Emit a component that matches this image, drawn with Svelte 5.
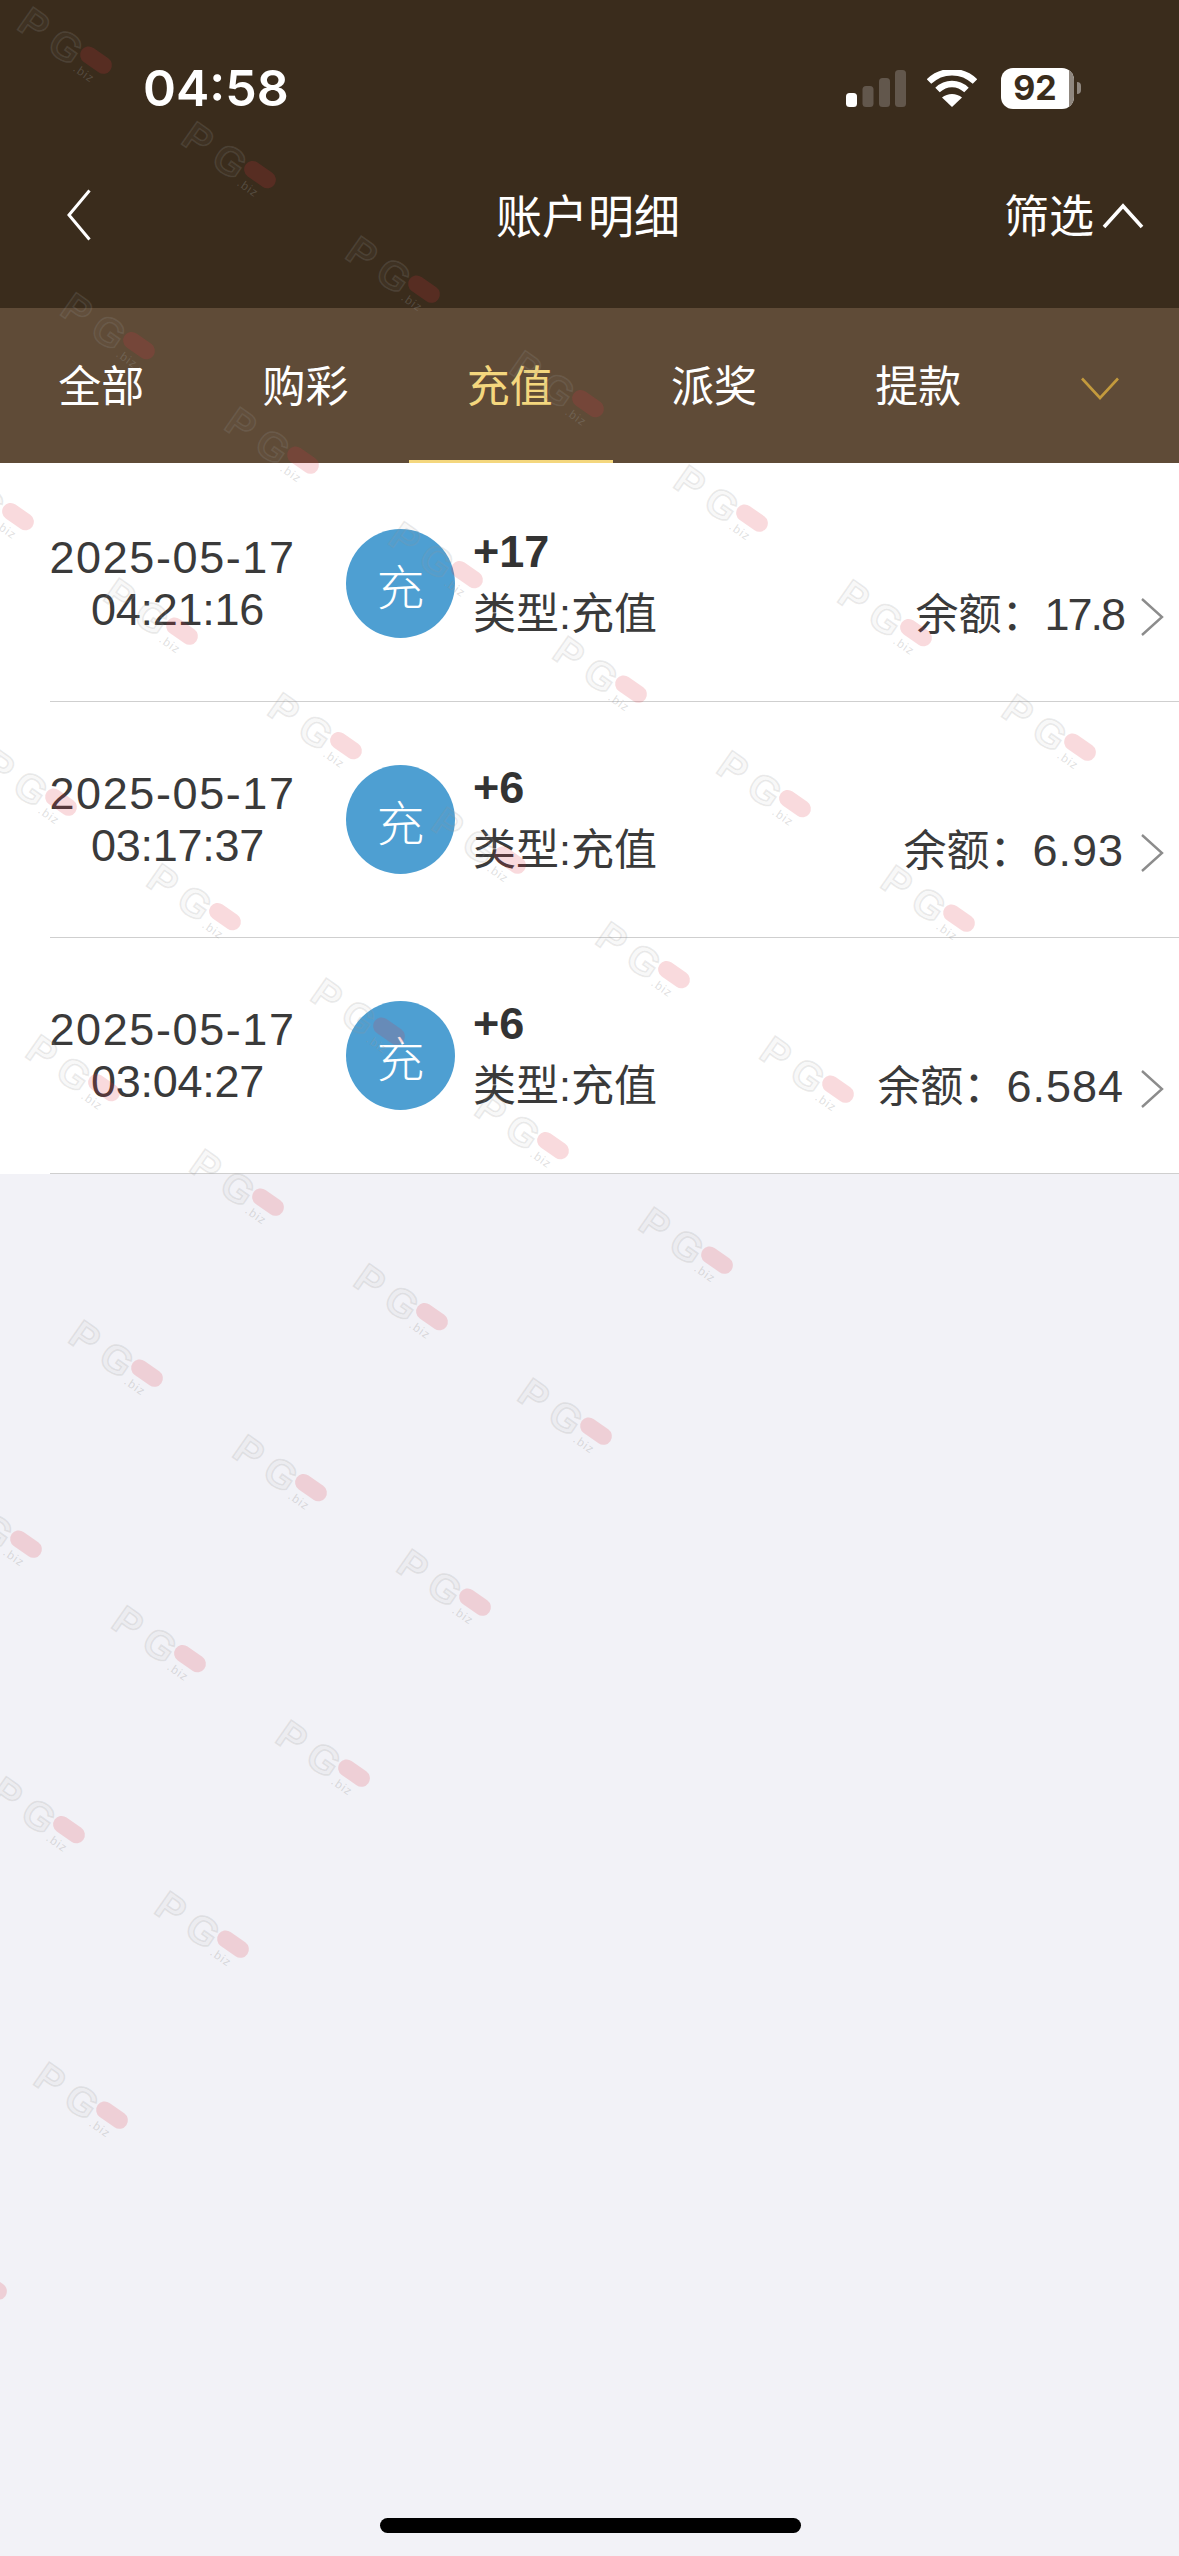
<script>
  const tabs = ['全部', '购彩', '充值', '派奖', '提款'];
  const rows = [
    { date: '2025-05-17', time: '04:21:16', amount: '+17', balance: '17.8', tight: true },
    { date: '2025-05-17', time: '03:17:37', amount: '+6', balance: '6.93', tight: false },
    { date: '2025-05-17', time: '03:04:27', amount: '+6', balance: '6.584', tight: false }
  ];
  const marks = [];
  for (let j = 0; j <= 9; j++) {
    for (let i = -3; i + j <= 6; i++) {
      const x = 19 + 164 * i + 43 * j;
      const y = 10 + 114.5 * i + 285.5 * j;
      if (x > -110 && x < 1179 && y > -80 && y < 2556) marks.push({ x, y });
    }
  }
</script>

<div class="page">
  <header class="top">
    <div class="status">
      <span class="clock">04:58</span>
      <div class="sys">
        <svg class="signal" width="60" height="37" viewBox="0 0 60 37">
          <rect x="0" y="23" width="11" height="14" rx="3.5" fill="#fff" />
          <rect x="16.5" y="16" width="11" height="21" rx="3.5" fill="#62574c" />
          <rect x="33" y="8" width="11" height="29" rx="3.5" fill="#62574c" />
          <rect x="49" y="0" width="11" height="37" rx="3.5" fill="#62574c" />
        </svg>
        <svg class="wifi" width="50" height="37" viewBox="0 0 50 37">
          <path d="M2 11.5C15 -1 35 -1 48 11.5" fill="none" stroke="#fff" stroke-width="6.5" />
          <path d="M10.5 20C19 12 31 12 39.5 20" fill="none" stroke="#fff" stroke-width="6.5" />
          <path d="M25 37L15 27.5C20.5 22.8 29.5 22.8 35 27.5Z" fill="#fff" />
        </svg>
        <div class="battery"><span>92</span><i></i></div>
        <b class="nub"></b>
      </div>
    </div>
    <nav class="nav">
      <svg class="back" width="24" height="52" viewBox="0 0 24 52">
        <path d="M22.5 1.5L2 26L22.5 50.5" fill="none" stroke="#fff" stroke-width="3" />
      </svg>
      <h1>账户明细</h1>
      <div class="filter">
        <span>筛选</span>
        <svg width="42" height="26" viewBox="0 0 42 26">
          <path d="M2 24L21 3L40 24" fill="none" stroke="#fff" stroke-width="3.6" />
        </svg>
      </div>
    </nav>
  </header>

  <div class="tabs">
    {#each tabs as t, i}
      <div class="tab" class:on={i === 2}>{t}</div>
    {/each}
    <div class="more">
      <svg width="38" height="23" viewBox="0 0 38 23">
        <path d="M1 1.5L19 21L37 1.5" fill="none" stroke="#c39a3d" stroke-width="2.6" />
      </svg>
    </div>
  </div>

  <section class="list">
    {#each rows as r}
      <div class="row">
        <div class="when"><div class="d">{r.date}</div><div class="t">{r.time}</div></div>
        <div class="badge">充</div>
        <div class="info">
          <div class="amount">{r.amount}</div>
          <div class="kind">类型:充值</div>
        </div>
        <div class="bal"><span class="lab">余额：</span><span class="val" class:tight={r.tight}>{r.balance}</span></div>
        <svg class="go" width="24" height="40" viewBox="0 0 24 40">
          <path d="M2 2L22 20L2 38" fill="none" stroke="#8c8c8c" stroke-width="2.4" />
        </svg>
      </div>
    {/each}
  </section>

  <div class="home"></div>

  <svg class="wm" width="1179" height="2556" viewBox="0 0 1179 2556" aria-hidden="true">
    {#each marks as m}
      <g transform="translate({m.x + 15} {m.y + 14}) rotate(35)">
        <text class="pg" x="-13" y="14">PG</text>
        <rect class="pill" x="54" y="-14.5" width="35" height="17" rx="8.5" />
        <text class="biz" x="58" y="16">.biz</text>
      </g>
    {/each}
  </svg>
</div>

<style>
  :global(body) {
    margin: 0;
    background: #f2f2f7;
  }
  .page {
    position: relative;
    width: 1179px;
    height: 2556px;
    overflow: hidden;
    background: #f2f2f7;
    font-family: "Liberation Sans", "Noto Sans CJK SC", sans-serif;
    color: #333;
  }
  .top {
    background: #3a2c1c;
    height: 308px;
    color: #fff;
  }
  .status {
    height: 176px;
    box-sizing: border-box;
    display: flex;
    align-items: center;
    padding: 0 98px 0 143px;
    justify-content: space-between;
  }
  .clock {
    font-family: Inter, "Liberation Sans", sans-serif;
    font-weight: 600;
    font-size: 50px;
    line-height: 1;
  }
  .sys {
    display: flex;
    align-items: center;
  }
  .signal {
    margin-right: 21px;
  }
  .wifi {
    margin-right: 24px;
  }
  .battery {
    position: relative;
    width: 73px;
    height: 41px;
    border-radius: 12px;
    background: #fff;
    overflow: hidden;
    display: flex;
    align-items: center;
    justify-content: center;
    padding-right: 5px;
    box-sizing: border-box;
  }
  .battery span {
    font-family: Inter, "Liberation Sans", sans-serif;
    font-weight: 700;
    font-size: 34px;
    color: #3a2c1c;
    line-height: 1;
  }
  .battery i {
    position: absolute;
    right: 0;
    top: 0;
    bottom: 0;
    width: 5px;
    background: #8f877f;
  }
  .nub {
    width: 4px;
    height: 12px;
    margin-left: 3px;
    border-radius: 0 4px 4px 0;
    background: #8f877f;
  }
  .nav {
    height: 78px;
    position: relative;
    display: flex;
    align-items: center;
    justify-content: center;
    font-family: "Noto Sans CJK SC", sans-serif;
  }
  .back {
    position: absolute;
    left: 67px;
    top: 13px;
  }
  h1 {
    margin: -5px 3px 0 0;
    font-size: 46px;
    font-weight: 400;
    line-height: 1;
  }
  .filter {
    position: absolute;
    left: 1004px;
    top: -3px;
    bottom: 0;
    display: flex;
    align-items: center;
    gap: 8px;
    font-size: 45px;
    line-height: 1;
  }
  .filter svg {
    margin-top: 5px;
  }
  .tabs {
    height: 155px;
    background: #5f4b37;
    display: flex;
    font-family: "Noto Sans CJK SC", sans-serif;
    font-size: 43px;
    color: #fff;
  }
  .tab {
    width: 204.3px;
    height: 155px;
    box-sizing: border-box;
    padding: 52px 2px 0 0;
    line-height: 46px;
    text-align: center;
    border-bottom: 3px solid transparent;
  }
  .tab.on {
    color: #f4d77e;
    border-bottom-color: #f4d77e;
  }
  .more {
    flex: 1;
    display: flex;
    justify-content: center;
    padding-top: 69px;
    box-sizing: border-box;
  }
  .more svg {
    margin-left: -1px;
  }
  .list {
    background: #fff;
    padding: 3px 0 0 50px;
  }
  .row {
    height: 236px;
    box-sizing: border-box;
    border-bottom: 1px solid #cfcfcf;
    display: flex;
    align-items: center;
  }
  .when {
    flex: none;
    width: 254px;
    margin: 0 46.5px 0 -4.5px;
    text-align: center;
    white-space: nowrap;
    font-size: 45px;
    line-height: 52px;
    color: #3a3a3a;
    padding-top: 1px;
  }
  .when .d {
    letter-spacing: 1.6px;
  }
  .when .t {
    padding-left: 10px;
    letter-spacing: -0.3px;
  }
  .badge {
    width: 109px;
    height: 109px;
    border-radius: 50%;
    background: #4e9fd2;
    color: #fff;
    font-family: "Noto Sans CJK SC", sans-serif;
    font-size: 48px;
    font-weight: 300;
    display: flex;
    align-items: center;
    justify-content: center;
    flex: none;
  }
  .info {
    margin-left: 18px;
  }
  .amount {
    font-size: 45px;
    font-weight: 700;
    line-height: 52px;
    height: 62px;
    margin-top: -2px;
    color: #333;
  }
  .kind {
    font-family: "Liberation Sans", "Noto Sans CJK SC", sans-serif;
    font-size: 43px;
    line-height: 52px;
    color: #3a3a3a;
  }
  .bal {
    margin-left: auto;
    align-self: flex-end;
    padding-bottom: 50px;
    line-height: 52px;
    color: #3a3a3a;
    white-space: nowrap;
  }
  .lab {
    font-family: "Noto Sans CJK SC", sans-serif;
    font-size: 43px;
  }
  .val {
    font-size: 45px;
    letter-spacing: 1px;
  }
  .val.tight {
    letter-spacing: -2px;
  }
  .go {
    align-self: flex-end;
    margin: 0 15px 64px 16px;
    flex: none;
  }
  .home {
    position: absolute;
    left: 380px;
    top: 2518px;
    width: 421px;
    height: 15px;
    border-radius: 8px;
    background: #000;
  }
  .wm {
    position: absolute;
    left: 0;
    top: 0;
    pointer-events: none;
  }
  .pg {
    font-family: "Liberation Sans", sans-serif;
    font-weight: 700;
    font-size: 40px;
    letter-spacing: 10px;
    fill: rgba(150, 150, 150, 0.06);
    stroke: rgba(150, 150, 150, 0.2);
    stroke-width: 1.5px;
  }
  .pill {
    fill: rgba(224, 50, 65, 0.18);
  }
  .biz {
    font-family: "Liberation Sans", sans-serif;
    font-size: 12px;
    letter-spacing: 1px;
    fill: rgba(150, 150, 150, 0.3);
  }
</style>
